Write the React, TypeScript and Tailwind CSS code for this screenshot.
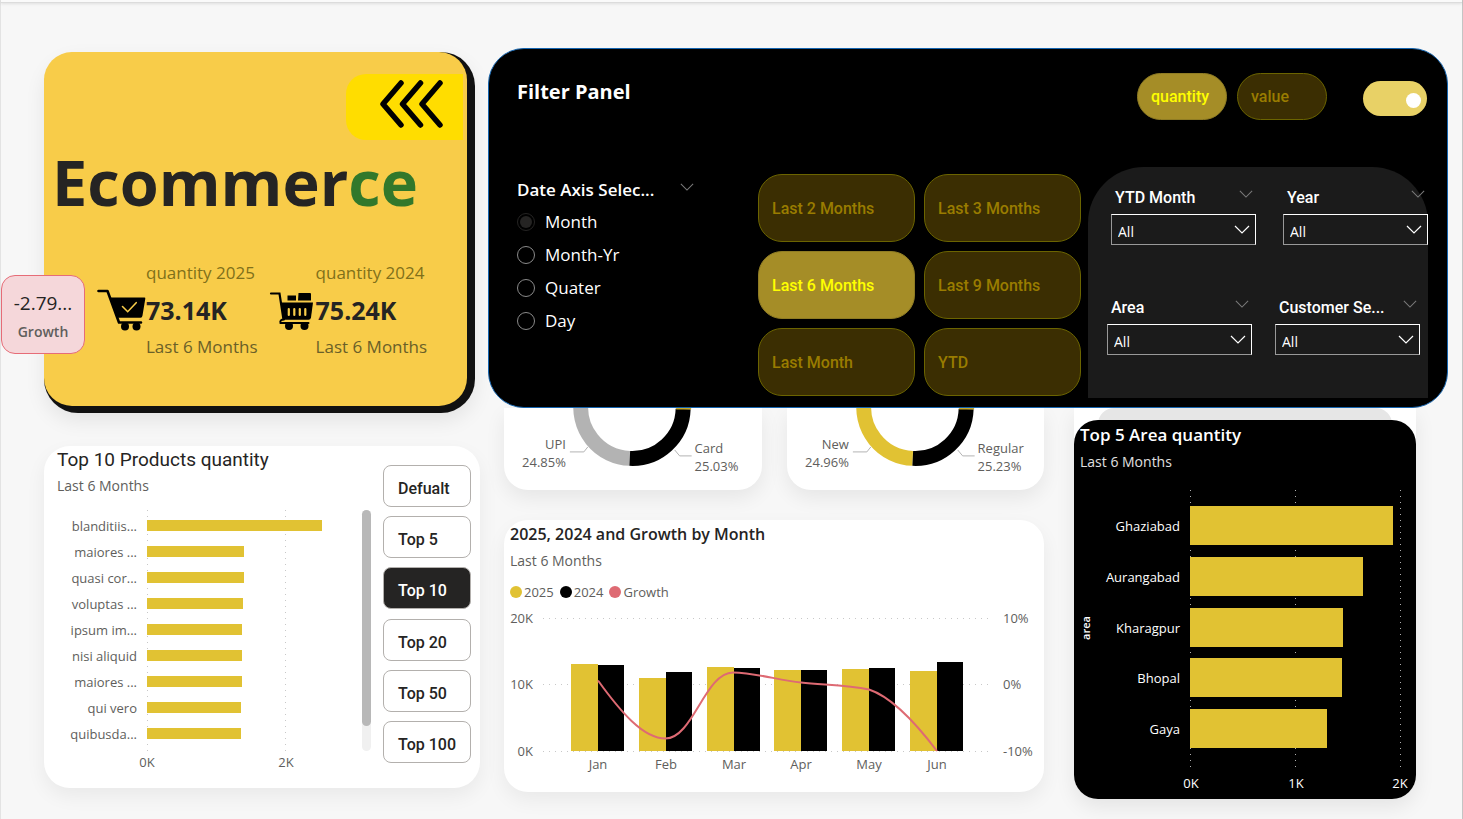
import { useId, useState } from "react";

const products = [
  { name: "blanditiis...", width: 175 },
  { name: "maiores ...", width: 97 },
  { name: "quasi cor...", width: 97 },
  { name: "voluptas ...", width: 96 },
  { name: "ipsum im...", width: 95 },
  { name: "nisi aliquid", width: 95 },
  { name: "maiores ...", width: 95 },
  { name: "qui vero", width: 94 },
  { name: "quibusda...", width: 94 },
];

const areas = [
  { name: "Ghaziabad", width: 203 },
  { name: "Aurangabad", width: 173 },
  { name: "Kharagpur", width: 153 },
  { name: "Bhopal", width: 152 },
  { name: "Gaya", width: 137 },
];

const months = [
  { name: "Jan", current: 87, previous: 86 },
  { name: "Feb", current: 73, previous: 79 },
  { name: "Mar", current: 84, previous: 83 },
  { name: "Apr", current: 81, previous: 81 },
  { name: "May", current: 82, previous: 83 },
  { name: "Jun", current: 80, previous: 89 },
];

const periods = ["Last 2 Months", "Last 3 Months", "Last 6 Months", "Last 9 Months", "Last Month", "YTD"];
const topOptions = ["Defualt", "Top 5", "Top 10", "Top 20", "Top 50", "Top 100"];
const axisOptions = ["Month", "Month-Yr", "Quater", "Day"];

function Chevron({ className }: { className: string }) {
  return (
    <svg viewBox="0 0 16 9" className={className} fill="none" stroke="currentColor" strokeWidth="1.200" aria-hidden="true">
      <path d="M1 1l7 7 7-7" />
    </svg>
  );
}

function CartCheck() {
  return (
    <svg viewBox="0 0 49 42" className="h-[42px] w-[49px] shrink-0" aria-hidden="true">
      <path d="M1.500 2h9l11.500 31.500h22" fill="none" stroke="#000" strokeWidth="2.600" strokeLinecap="round" strokeLinejoin="round" />
      <path d="M13 8.500h34.500q1 0 .8 1.200l-2.800 16.800q-.3 2.200-2 2.200H19.500z" />
      <path d="M25.500 17.500l5.200 5.200 8.500-9" fill="none" stroke="#f8cc49" strokeWidth="1.600" strokeLinecap="round" />
      <circle cx="28" cy="37.500" r="4" />
      <circle cx="39.500" cy="37.500" r="4" />
    </svg>
  );
}

function CartFull() {
  return (
    <svg viewBox="0 0 47 42" className="h-[42px] w-[47px] shrink-0" aria-hidden="true">
      <path d="M2 4.500h8.500l4 26" fill="none" stroke="#000" strokeWidth="2.200" strokeLinecap="round" />
      <path d="M18.500 6.500h8.500v5h-8.500zM29.500 4h11.500q1 0 1 1v6.500H29z" />
      <path d="M12.500 13.500H44l-2 15q-.4 2.300-2.400 2.300H14.500z" />
      <path d="M19.800 20v6M25.300 20v6M30.800 20v6M36.300 20v6" stroke="#f8cc49" strokeWidth="2.200" strokeLinecap="round" />
      <path d="M13 31.800h27" stroke="#f8cc49" strokeWidth="1.500" />
      <path d="M15 30.500q-4.500 0-3.500 3.500h28" fill="none" stroke="#000" strokeWidth="2" strokeLinecap="round" />
      <circle cx="20" cy="37" r="4" />
      <circle cx="35.500" cy="37" r="4" />
    </svg>
  );
}

function Kpi({ label, value, icon }: { label: string; value: string; icon: React.ReactNode }) {
  return (
    <div className="flex items-center">
      {icon}
      <div className="text-[17px] leading-[36px]">
        <p className="text-[#80701a]">{label}</p>
        <p className="text-[25px] leading-[38px] font-bold text-[#252423]">{value}</p>
        <p className="text-[#6a6028]">Last 6 Months</p>
      </div>
    </div>
  );
}

function Hero() {
  return (
    <section className="relative mr-[5px] rounded-[34px] bg-[#111] pr-2 pb-[7px] shadow-[0_8px_20px_rgba(0,0,0,0.08)]">
      <div className="flex h-[354px] flex-col rounded-[28px] bg-[#f8cc49] pt-[22px]">
        <button
          aria-label="Collapse filter panel"
          className="mr-1 flex h-[66px] w-[117px] items-start self-end rounded-l-[20px] bg-[#ffdd00] pt-1 pl-[33px]"
        >
          <svg viewBox="0 0 64 52" className="h-[52px] w-[64px]" fill="none" stroke="#000" strokeWidth="5.500" strokeLinecap="round" strokeLinejoin="round">
            <path d="M22 5L4 26l18 21M41.500 5l-18 21 18 21M61 5L43 26l18 21" />
          </svg>
        </button>
        <h1 className="pl-2 text-[63px] leading-[84px] font-bold text-[#252423]">
          Ecommer<span className="text-[#32782b]">ce</span>
        </h1>
        <div className="mt-[31px] flex gap-[11px] pl-[53px]">
          <Kpi label="quantity 2025" value="73.14K" icon={<CartCheck />} />
          <Kpi label="quantity 2024" value="75.24K" icon={<CartFull />} />
        </div>
      </div>
      <div className="absolute top-[223px] -left-[43px] flex h-[79px] w-[84px] flex-col items-center rounded-[14px] border border-[#e66c77] bg-[#f5d7da] pt-3">
        <p className="text-[19px] leading-[30px] font-medium text-[#252423]">-2.79...</p>
        <p className="text-[14px] leading-[28px] font-semibold text-[#605e5c]">Growth</p>
      </div>
    </section>
  );
}

function ProductsCard() {
  const [top, setTop] = useState("Top 10");
  return (
    <section className="flex h-[342px] rounded-[26px] bg-white pr-[9px] shadow-[0_8px_20px_rgba(0,0,0,0.06)]">
      <div className="min-w-0 flex-1">
        <h2 className="pl-[13px] font-[Roboto] text-[19px] leading-[28px] text-[#252423]">Top 10 Products quantity</h2>
        <p className="pl-[13px] text-[14px] leading-[24px] text-[#605e5c]">Last 6 Months</p>
        <svg viewBox="0 0 318 270" className="mt-[7px] w-full text-[13px]" fill="#605e5c">
          <path d="M103.500 5v241M241.500 5v241" stroke="#c8c8c8" strokeDasharray="1 5" />
          {products.map((product, row) => (
            <g key={row}>
              <text x="93" y={26 + row * 26} textAnchor="end">{product.name}</text>
              <rect x="103" y={15 + row * 26} width={product.width} height="11" fill="#e1c233" />
            </g>
          ))}
          <text x="103" y="262" textAnchor="middle">0K</text>
          <text x="242" y="262" textAnchor="middle">2K</text>
        </svg>
      </div>
      <div className="mt-16 h-[241px] w-[9px] rounded-full bg-[#f0f0f0]">
        <div className="h-[216px] rounded-full bg-[#b8b8b8]" />
      </div>
      <div className="mt-[19px] ml-3 flex h-[298px] w-[88px] flex-col justify-between">
        {topOptions.map((option) => (
          <button
            key={option}
            onClick={() => setTop(option)}
            aria-pressed={option === top}
            className={`h-[42px] rounded-lg border border-[#b3b0ad] pt-[6px] pl-[14px] text-left font-[Roboto] text-[16px] font-medium ${
              option === top ? "bg-[#252423] text-white" : "bg-white text-[#252423]"
            }`}
          >
            {option}
          </button>
        ))}
      </div>
    </section>
  );
}

function Pill({ label, active, onClick, className }: { label: string; active: boolean; onClick: () => void; className: string }) {
  return (
    <button
      onClick={onClick}
      aria-pressed={active}
      className={`rounded-[24px] border pl-[13px] text-left font-[Roboto] text-[16px] font-medium ${className} ${
        active ? "border-[#8f7c24] bg-[#a58d27] text-[#ffff00]" : "border-[#6b6400] bg-[#3b2e02] text-[#997c00]"
      }`}
    >
      {label}
    </button>
  );
}

function Dropdown({ label }: { label: string }) {
  const id = useId();
  return (
    <div className="min-w-0 flex-1">
      <div className="flex items-start justify-between pr-[3px] pl-1">
        <label htmlFor={id} className="font-[Roboto] text-[16px] leading-[24px] font-medium whitespace-nowrap text-white">
          {label}
        </label>
        <Chevron className="mt-1 h-2 w-[14px] text-[#7a7a7a]" />
      </div>
      <div className="mt-1 grid items-center">
        <select
          id={id}
          className="col-start-1 row-start-1 h-[31px] w-full appearance-none border border-white border-b-[#999] border-l-[#999] bg-transparent pt-1 pl-[6px] text-[14px] text-white"
        >
          <option>All</option>
        </select>
        <Chevron className="pointer-events-none col-start-1 row-start-1 mr-[6px] h-[9px] w-4 justify-self-end text-white" />
      </div>
    </div>
  );
}

function FilterPanel() {
  const [measure, setMeasure] = useState("quantity");
  const [period, setPeriod] = useState("Last 6 Months");
  return (
    <section className="h-[360px] rounded-[36px] border border-[#1565b0] bg-black pr-[19px] pl-7 text-white">
      <div className="flex h-[118px] items-start pt-6 pr-px">
        <h2 className="flex-1 text-[20px] leading-[38px] font-bold">Filter Panel</h2>
        <div className="flex gap-[10px]">
          {["quantity", "value"].map((name) => (
            <Pill key={name} label={name} active={name === measure} onClick={() => setMeasure(name)} className="h-[47px] w-[90px]" />
          ))}
        </div>
        <label className="mt-2 ml-[36px] flex h-[35px] w-[64px] items-center justify-end rounded-full bg-[#e8d166] pt-[3px] pr-[6px]">
          <input
            type="checkbox"
            defaultChecked
            aria-label="Show filters"
            className="size-[15px] appearance-none rounded-full bg-white"
          />
        </label>
      </div>
      <div className="grid grid-cols-[234fr_323fr_340fr] gap-x-[7px]">
        <fieldset className="pt-2">
          <legend className="contents">
            <span className="flex items-start gap-[26px] text-[17px] leading-[30px] font-semibold">
              Date Axis Selec...
              <Chevron className="mt-2 h-2 w-[14px] text-[#7a7a7a]" />
            </span>
          </legend>
          {axisOptions.map((option) => (
            <label key={option} className="flex h-[33px] items-center gap-[10px] text-[17px]">
              <input
                type="radio"
                name="axis"
                defaultChecked={option === "Month"}
                className="size-[18px] appearance-none rounded-full border border-[#8a8a8a] bg-clip-content p-[2px] checked:border-[#252423] checked:bg-[#252423]"
              />
              {option}
            </label>
          ))}
        </fieldset>
        <div className="grid grid-cols-2 gap-x-[9px] gap-y-[9px] self-start pt-[7px]">
          {periods.map((name) => (
            <Pill key={name} label={name} active={name === period} onClick={() => setPeriod(name)} className="h-[68px] pt-[2px]" />
          ))}
        </div>
        <div className="h-[231px] rounded-t-[56px] bg-[#1b1b1b] pt-[19px]">
          <div className="flex gap-[27px] pl-[23px]">
            <Dropdown label="YTD Month" />
            <Dropdown label="Year" />
          </div>
          <div className="mt-[51px] flex gap-[23px] pr-2 pl-[19px]">
            <Dropdown label="Area" />
            <Dropdown label="Customer Se..." />
          </div>
        </div>
      </div>
    </section>
  );
}

function DonutCard({ leftColor, left, right }: { leftColor: string; left: [string, string]; right: [string, string] }) {
  return (
    <section className="rounded-b-[24px] bg-white shadow-[0_8px_20px_rgba(0,0,0,0.07)]">
      <svg viewBox="0 0 258 82" className="w-full text-[13px]" fill="#605e5c">
        <path d="M77.800 -10A51 51 0 0 0 126 50.500" fill="none" stroke={leftColor} strokeWidth="15" />
        <path d="M126 50.500A51 51 0 0 0 179.500 1" fill="none" stroke="#000" strokeWidth="15" />
        <path d="M172.500 0h15v1.500h-15z" fill="#c9a927" />
        <path d="M66 44h14l4-5M171 42l5 6h12" fill="none" stroke="#b3b3b3" />
        <text x="62" y="41" textAnchor="end">{left[0]}</text>
        <text x="62" y="59" textAnchor="end">{left[1]}</text>
        <text x="191" y="45">{right[0]}</text>
        <text x="191" y="63">{right[1]}</text>
      </svg>
    </section>
  );
}

function TrendCard() {
  const legend = [
    { label: "2025", dot: "bg-[#e1c233]" },
    { label: "2024", dot: "bg-black" },
    { label: "Growth", dot: "bg-[#de6a73]" },
  ];
  return (
    <section className="h-[272px] rounded-[24px] bg-white shadow-[0_8px_20px_rgba(0,0,0,0.06)]">
      <h2 className="pl-[6px] text-[16px] leading-[28px] font-semibold text-[#252423]">2025, 2024 and Growth by Month</h2>
      <p className="pl-[6px] text-[14px] leading-[26px] text-[#605e5c]">Last 6 Months</p>
      <div className="mt-2 flex gap-[6px] pl-[6px] text-[13px] leading-[20px] text-[#605e5c]">
        {legend.map((item) => (
          <span key={item.label} className="flex items-center gap-[2px]">
            <span className={`size-3 rounded-full ${item.dot}`} />
            {item.label}
          </span>
        ))}
      </div>
      <svg viewBox="0 0 540 178" className="w-full text-[13px]" fill="#605e5c">
        <path d="M39 16.500h450M39 82.500h450M39 149.500h450" stroke="#c8c8c8" strokeDasharray="1 5" />
        <text x="29" y="21" textAnchor="end">20K</text>
        <text x="29" y="87" textAnchor="end">10K</text>
        <text x="29" y="154" textAnchor="end">0K</text>
        <text x="499" y="21">10%</text>
        <text x="499" y="87">0%</text>
        <text x="499" y="154">-10%</text>
        {months.map((month, index) => (
          <g key={month.name} transform={`translate(${Math.round(67.8 * index)} 0)`}>
            <rect x="67" y={149 - month.current} width="27" height={month.current} fill="#e1c233" />
            <rect x="94" y={149 - month.previous} width="26" height={month.previous} fill="#000" />
            <text x="94" y="167" textAnchor="middle">{month.name}</text>
          </g>
        ))}
        <path
          d="M94 78.500C116 109 139 136.500 161.500 136.500C189 136.500 201 70.500 229 70.500C252 71 274 78 297 80.500C320 83 342 83 365 87.500C388 95 411 120 433 149"
          fill="none"
          stroke="#de6a73"
          strokeWidth="2"
        />
      </svg>
    </section>
  );
}

function AreaCard() {
  return (
    <section className="relative rounded-b-[24px] bg-white pt-3 shadow-[0_8px_20px_rgba(0,0,0,0.08)]">
      <div className="absolute inset-x-6 top-0 h-8 rounded-t-[16px] bg-[#e6e6e6]" />
      <div className="relative h-[379px] rounded-[24px] bg-black text-white">
        <h2 className="pl-[6px] text-[17px] leading-[30px] font-semibold">Top 5 Area quantity</h2>
        <p className="pl-[6px] text-[14px] leading-[24px] text-[#e0e0e0]">Last 6 Months</p>
        <svg viewBox="0 0 342 320" className="mt-[5px] w-full text-[13px]" fill="#fff">
          <path d="M116.500 11v281M221.500 11v281M326.500 11v281" stroke="#b0b0b0" strokeDasharray="1 5" />
          {areas.map((area, row) => (
            <g key={area.name} transform={`translate(0 ${Math.round(50.8 * row)})`}>
              <text x="106" y="52" textAnchor="end">{area.name}</text>
              <rect x="116" y="27" width={area.width} height="39" fill="#e1c233" />
            </g>
          ))}
          <text x="117" y="309" textAnchor="middle">0K</text>
          <text x="222" y="309" textAnchor="middle">1K</text>
          <text x="326" y="309" textAnchor="middle">2K</text>
          <text transform="translate(16 149) rotate(-90)" textAnchor="middle" className="text-[11px] font-semibold">area</text>
        </svg>
      </div>
    </section>
  );
}

export default function App() {
  return (
    <div className="min-h-screen border-r border-l border-r-[#c4c4c4] border-l-[#e3e3e3] bg-[#f7f7f7] font-['Open_Sans','Noto_Sans',sans-serif]">
      <div className="h-[3px] border-b border-[#dcdcdc] bg-[#fafafa] shadow-[0_1px_3px_rgba(0,0,0,0.1)]" />
      <main className="grid grid-cols-[436fr_960fr] gap-x-2 pt-[45px] pr-[14px] pl-[43px]">
        <div className="flex flex-col gap-[33px] pt-1">
          <Hero />
          <ProductsCard />
        </div>
        <div>
          <FilterPanel />
          <div className="grid grid-cols-[540fr_342fr] items-start gap-x-[30px] pr-8 pl-4">
            <div className="grid gap-y-[30px]">
              <div className="grid grid-cols-2 gap-x-[25px]">
                <DonutCard leftColor="#b3b3b3" left={["UPI", "24.85%"]} right={["Card", "25.03%"]} />
                <DonutCard leftColor="#e1c233" left={["New", "24.96%"]} right={["Regular", "25.23%"]} />
              </div>
              <TrendCard />
            </div>
            <AreaCard />
          </div>
        </div>
      </main>
    </div>
  );
}
